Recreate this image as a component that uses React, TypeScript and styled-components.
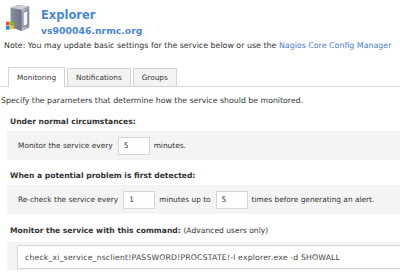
import React from "react";
import styled, { createGlobalStyle } from "styled-components";

const Global = createGlobalStyle`
  html, body { margin: 0; padding: 0; background: #fff; }
  body { font-family: "DejaVu Sans", Verdana, sans-serif; font-size: 7.6px; color: #333; width: 400px; height: 272px; overflow: hidden; }
`;

const Page = styled.div`
  display: flex;
  flex-direction: column;
  padding: 4px 0 0 0;
`;

const Header = styled.div`
  display: flex;
  align-items: flex-start;
  gap: 10px;
  padding-left: 5px;
  height: 33px;
`;

const Titles = styled.div`
  display: flex;
  flex-direction: column;
  padding-top: 4px;
  gap: 3px;
`;

const Title = styled.div`
  font-weight: bold;
  font-size: 11.5px;
  color: #4a86d8;
  line-height: 14px;
`;

const Subtitle = styled.div`
  font-weight: bold;
  font-size: 9.3px;
  color: #4a86d8;
  line-height: 12px;
`;

const Note = styled.div`
  margin-top: 4px;
  padding-left: 4px;
  font-size: 7.9px;
  line-height: 10px;
  white-space: nowrap;
`;

const Link = styled.span`
  color: #4a7bd0;
`;

const TabBar = styled.div`
  display: flex;
  gap: 2px;
  margin-top: 16px;
  padding-left: 8px;
  border-bottom: 1px solid #d4d4d4;
  height: 19px;
  align-items: flex-end;
`;

const Tab = styled.div<{ $active?: boolean }>`
  height: ${(p) => (p.$active ? 20 : 18)}px;
  padding: 0 8px;
  display: flex;
  align-items: center;
  font-size: 7.3px;
  border: 1px solid #d4d4d4;
  border-bottom: none;
  background: ${(p) => (p.$active ? "#fff" : "#f3f3f3")};
  margin-bottom: ${(p) => (p.$active ? -1 : 0)}px;
  box-sizing: border-box;
  color: #333;
`;

const Para = styled.div`
  margin-top: 9px;
  padding-left: 1px;
  font-size: 7.8px;
  line-height: 10px;
`;

const SectionTitle = styled.div<{ $gap?: number }>`
  font-weight: bold;
  margin-top: ${(p) => p.$gap ?? 11}px;
  padding-left: 10px;
  line-height: 10px;
`;

const Field = styled.div`
  margin: 4px 0 0 7px;
  background: #f4f4f4;
  height: 29px;
  display: flex;
  align-items: center;
  padding-left: 11px;
  font-size: 7.4px;
  white-space: nowrap;
`;

const Small = styled.span`
  display: inline-flex;
  align-items: center;
  width: 32px;
  height: 18px;
  box-sizing: border-box;
  border: 1px solid #d6d6d6;
  background: #fff;
  padding-left: 5px;
  margin: 0 4px 0 5px;
`;

const Muted = styled.span`
  font-weight: normal;
`;

const CommandField = styled(Field)`
  margin-top: 6px;
  padding-left: 10px;
  height: 28px;
  align-items: flex-start;
  padding-top: 3px;
  box-sizing: border-box;
  font-size: 7.7px;
`;

const Wide = styled.div`
  flex: 1;
  height: 24px;
  box-sizing: border-box;
  border: 1px solid #d6d6d6;
  border-right: none;
  background: #fff;
  display: flex;
  align-items: center;
  padding-left: 7px;
  letter-spacing: 0.2px;
  color: #444;
`;

const ServerIcon = () => (
  <svg width="26" height="28" viewBox="0 0 28 30">
    <defs>
      <linearGradient id="side" x1="0" x2="1">
        <stop offset="0" stopColor="#8a8fa0" />
        <stop offset="1" stopColor="#5b6070" />
      </linearGradient>
      <linearGradient id="front" x1="0" x2="1">
        <stop offset="0" stopColor="#b9bfcc" />
        <stop offset="1" stopColor="#8d93a3" />
      </linearGradient>
    </defs>
    <path d="M6 4 L14 1 L26 3 L26 25 L18 29 L6 25 Z" fill="url(#side)" />
    <path d="M6 4 L14 1 L26 3 L18 6 Z" fill="#c9ceda" />
    <path d="M18 6 L26 3 L26 25 L18 29 Z" fill="url(#front)" />
    <path d="M19.5 9 L24.5 7 L24.5 22 L19.5 24.5 Z" fill="#f4f5f8" stroke="#444" strokeWidth="0.6" />
    <rect x="1" y="19" width="4" height="4" fill="#e8532a" />
    <rect x="5.5" y="18.5" width="4" height="4" fill="#7cbb2a" />
    <rect x="1" y="23.5" width="4" height="4" fill="#2b8ad8" />
    <rect x="5.5" y="23" width="4" height="4" fill="#f8c21a" />
  </svg>
);

export default function App() {
  return (
    <>
      <Global />
      <Page>
        <Header>
          <ServerIcon />
          <Titles>
            <Title>Explorer</Title>
            <Subtitle>vs900046.nrmc.org</Subtitle>
          </Titles>
        </Header>
        <Note>
          Note: You may update basic settings for the service below or use the <Link>Nagios Core Config Manager</Link>
        </Note>
        <TabBar>
          <Tab $active>Monitoring</Tab>
          <Tab>Notifications</Tab>
          <Tab>Groups</Tab>
        </TabBar>
        <Para>Specify the parameters that determine how the service should be monitored.</Para>
        <SectionTitle>Under normal circumstances:</SectionTitle>
        <Field>
          Monitor the service every<Small>5</Small>minutes.
        </Field>
        <SectionTitle>When a potential problem is first detected:</SectionTitle>
        <Field>
          Re-check the service every<Small>1</Small>minutes up to<Small>5</Small>times before generating an alert.
        </Field>
        <SectionTitle $gap={12}>
          Monitor the service with this command: <Muted>(Advanced users only)</Muted>
        </SectionTitle>
        <CommandField>
          <Wide>check_xi_service_nsclient!PASSWORD!PROCSTATE!-l explorer.exe -d SHOWALL</Wide>
        </CommandField>
      </Page>
    </>
  );
}
